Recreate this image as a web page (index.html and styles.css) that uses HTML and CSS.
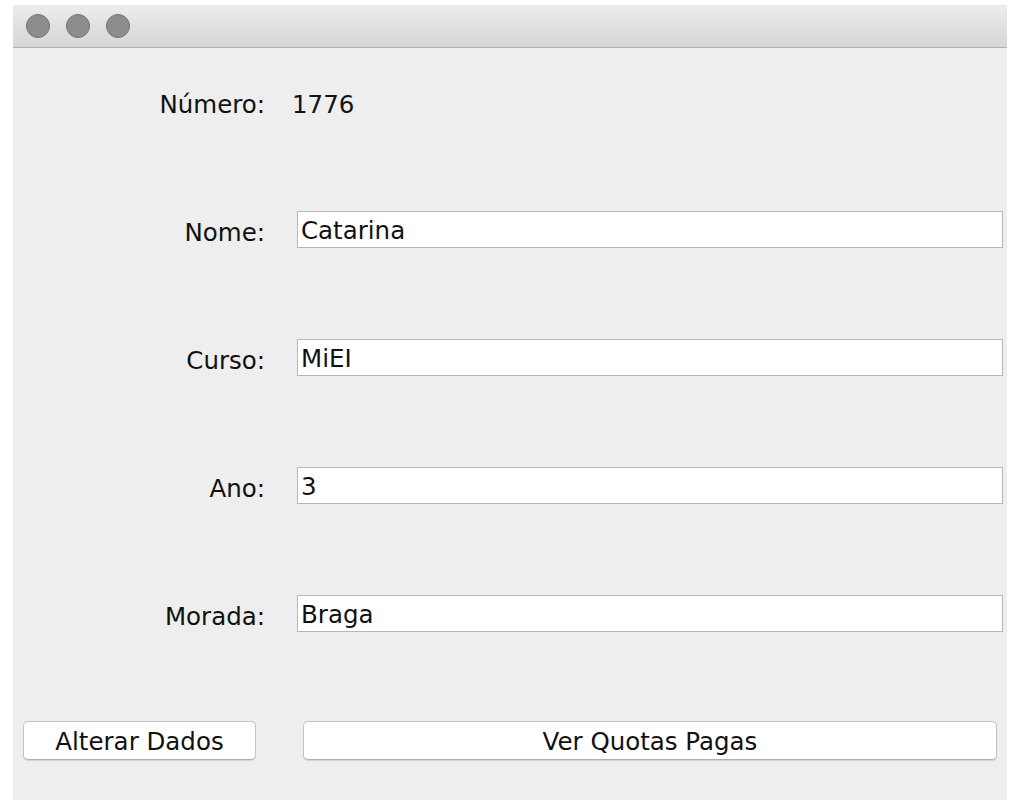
FILE: index.html
```html
<!DOCTYPE html>
<html>
<head>
<meta charset="utf-8">
<link rel="stylesheet" href="styles.css">
</head>
<body>
<div class="window">
  <div class="titlebar">
    <span class="light"></span>
    <span class="light"></span>
    <span class="light"></span>
  </div>
  <div class="content">
    <div class="row">
      <div class="label">Número:</div>
      <div class="value">1776</div>
    </div>
    <div class="row">
      <div class="label">Nome:</div>
      <div class="field">Catarina</div>
    </div>
    <div class="row">
      <div class="label">Curso:</div>
      <div class="field">MiEI</div>
    </div>
    <div class="row">
      <div class="label">Ano:</div>
      <div class="field">3</div>
    </div>
    <div class="row">
      <div class="label">Morada:</div>
      <div class="field">Braga</div>
    </div>
    <div class="buttons">
      <button class="btn btn-left">Alterar Dados</button>
      <button class="btn btn-right">Ver Quotas Pagas</button>
    </div>
  </div>
</div>
</body>
</html>
```

FILE: styles.css
```css
html, body {
  margin: 0;
  padding: 0;
  background: #ffffff;
}
body {
  padding: 5px 9px 10px 13px;
  font-family: "DejaVu Sans", "Liberation Sans", sans-serif;
  font-size: 24.5px;
  color: #111111;
}
.window {
  width: 994px;
  height: 795px;
  background: #eeeeee;
  display: flex;
  flex-direction: column;
}
.titlebar {
  height: 43px;
  box-sizing: border-box;
  background: linear-gradient(#ececec, #d6d6d6);
  border-bottom: 1px solid #b0b0b0;
  display: flex;
  align-items: center;
  gap: 16px;
  padding: 0 0 0 13px;
}
.light {
  width: 24px;
  height: 24px;
  box-sizing: border-box;
  border-radius: 50%;
  background: #8c8c8c;
  border: 1px solid #747474;
}
.content {
  display: flex;
  flex-direction: column;
  padding-top: 35px;
}
.row {
  display: grid;
  grid-template-columns: 252px 706px;
  column-gap: 32px;
  height: 37px;
  align-items: center;
  margin-bottom: 91px;
}
.row:nth-child(5) {
  margin-bottom: 89px;
}
.label {
  text-align: right;
  white-space: nowrap;
  padding-top: 6px;
}
.value {
  margin-left: -5px;
  padding-top: 6px;
}
.field {
  height: 37px;
  box-sizing: border-box;
  background: #ffffff;
  border: 1px solid #b8b8b8;
  padding: 3px 3px 0;
  line-height: 32px;
  white-space: nowrap;
}
.buttons {
  display: flex;
  gap: 47px;
  padding-left: 10px;
}
.btn {
  height: 39px;
  box-sizing: border-box;
  background: #ffffff;
  border: 1px solid #c4c4c4;
  border-bottom-color: #afafaf;
  border-radius: 5px;
  box-shadow: 0 1px 1px rgba(0,0,0,0.12);
  font-family: "DejaVu Sans", "Liberation Sans", sans-serif;
  font-size: 24.5px;
  color: #111111;
  padding: 2px 0 0;
  margin: 0;
}
.btn-left {
  width: 233px;
}
.btn-right {
  width: 694px;
}
```
